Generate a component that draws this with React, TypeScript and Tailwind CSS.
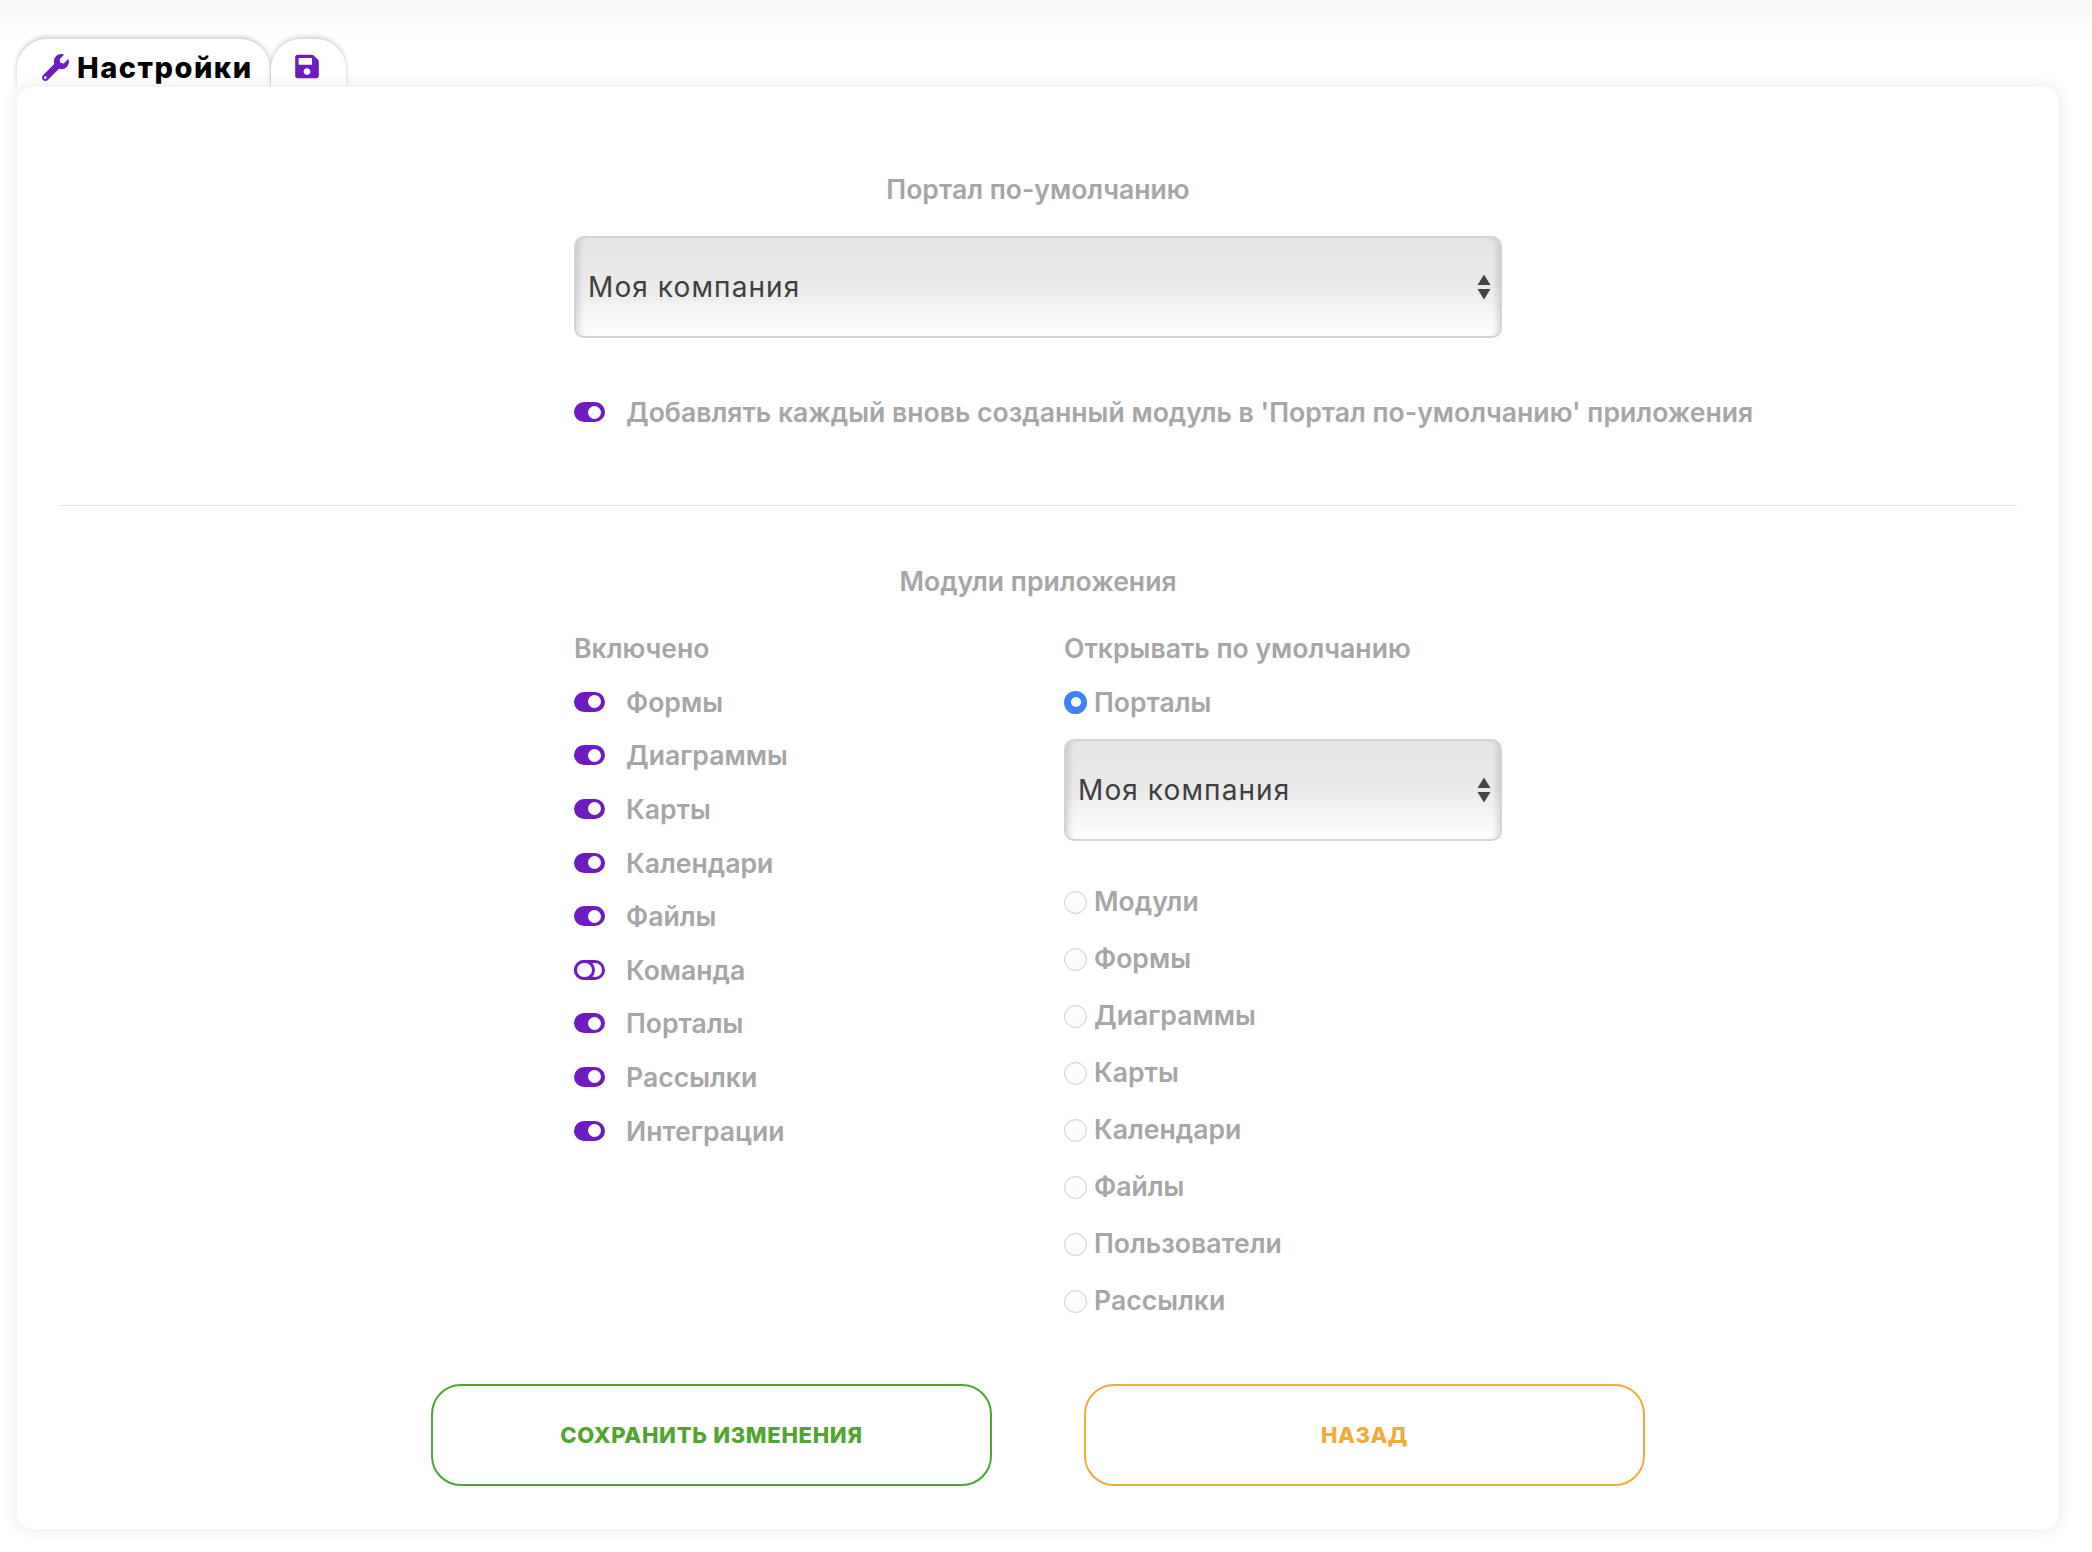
import React from "react";
import { FaWrench, FaSave } from "react-icons/fa";

const enabled: [string, boolean][] = [
  ["Формы", true],
  ["Диаграммы", true],
  ["Карты", true],
  ["Календари", true],
  ["Файлы", true],
  ["Команда", false],
  ["Порталы", true],
  ["Рассылки", true],
  ["Интеграции", true],
];
const openers = ["Модули", "Формы", "Диаграммы", "Карты", "Календари", "Файлы", "Пользователи", "Рассылки"];

function Toggle({ on }: { on: boolean }) {
  if (on) {
    return (
      <span className="flex h-[20px] w-[31px] shrink-0 items-center justify-end rounded-full bg-[#6e1bc0] pr-[4px]">
        <span className="h-[13px] w-[13px] rounded-full bg-white" />
      </span>
    );
  }
  return (
    <span className="flex h-[20px] w-[31px] shrink-0 items-center rounded-full bg-[#6e1bc0] pl-[3px]">
      <span className="relative z-10 h-[14px] w-[15px] rounded-full bg-white shadow-[0_0_0_3px_#6e1bc0]" />
      <span className="-ml-[4px] h-[14px] w-[14px] rounded-full bg-white" />
    </span>
  );
}

function Radio({ on, label }: { on?: boolean; label: string }) {
  return (
    <div className="flex h-full items-center">
      {on ? (
        <span className="flex h-[23px] w-[23px] shrink-0 items-center justify-center rounded-full bg-[#3b82f6]">
          <span className="h-[10px] w-[10px] rounded-full bg-white" />
        </span>
      ) : (
        <span className="mt-[2px] h-[23px] w-[23px] shrink-0 rounded-full border border-[#cccccc] bg-[linear-gradient(#ffffff,#fafafa)] shadow-[inset_0_1px_2px_rgba(0,0,0,0.05)]" />
      )}
      <span className={(on ? "pt-[2px] " : "") + "ml-[7px] text-[26.6px] font-semibold text-[#a6a6a6]"}>{label}</span>
    </div>
  );
}

function SelectBox({ className }: { className: string }) {
  return (
    <div
      className={
        "relative flex h-[102px] items-center rounded-[10px] border-2 border-[#d3d3d3] bg-[linear-gradient(#e6e6e6_0%,#eaeaea_50%,#ffffff_100%)] pl-[12px] shadow-[inset_8px_0_6px_-5px_rgba(0,0,0,0.13),inset_-8px_0_6px_-5px_rgba(0,0,0,0.13)] " +
        className
      }
    >
      <span className="text-[28px] font-normal leading-none tracking-[1.1px] text-[#3f3f3f]">Моя компания</span>
      <svg className="absolute right-[9px] top-1/2 -translate-y-1/2" width="14" height="25" viewBox="0 0 14 25">
        <path d="M7 0 L13.5 10.5 H0.5 Z" fill="#444" />
        <path d="M0.5 14.5 H13.5 L7 25 Z" fill="#444" />
      </svg>
    </div>
  );
}

export default function App() {
  return (
    <div className="min-h-[1552px] bg-[linear-gradient(#f7f7f7_0px,#ffffff_40px)] pl-[17px] pt-[39px] font-['Inter',sans-serif]">
      <div className="relative z-10 flex h-[48px] items-stretch">
        <div className="flex w-[253px] items-center rounded-t-[30px] bg-white pl-[25px] pt-[9px] shadow-[0_-2px_5px_rgba(0,0,0,0.22)]">
          <FaWrench className="h-[27px] w-[27px] text-[#6e1bc0]" />
          <span className="ml-[8px] text-[29px] font-extrabold leading-none tracking-[1.5px] text-black">Настройки</span>
        </div>
        <div className="ml-[1px] flex w-[75px] items-center justify-center rounded-t-[30px] bg-white pr-[3px] pt-[7px] shadow-[0_-2px_5px_rgba(0,0,0,0.2)]">
          <FaSave className="h-[27px] w-[24px] text-[#6e1bc0]" />
        </div>
      </div>

      <div className="relative z-20 h-[1442px] w-[2042px] rounded-[16px] bg-white shadow-[0_0_16px_rgba(0,0,0,0.1)]">
        <div className="pt-[82px]">
          <h2 className="text-center text-[26.6px] font-semibold leading-[40px] text-[#a6a6a6]">Портал по-умолчанию</h2>
          <div className="mx-auto w-[928px]">
            <SelectBox className="mt-[27px] w-full" />
            <div className="mt-[54px] flex h-[40px] w-[1300px] items-center">
              <Toggle on />
              <span className="ml-[21px] whitespace-nowrap pt-[2px] text-[26.6px] font-semibold text-[#a6a6a6]">
                Добавлять каждый вновь созданный модуль в 'Портал по-умолчанию' приложения
              </span>
            </div>
          </div>
          <div className="mx-auto mt-[73px] h-px w-[1958px] bg-[#e6e6e6]" />
          <h2 className="mt-[55px] text-center text-[26.6px] font-semibold leading-[40px] text-[#a6a6a6]">Модули приложения</h2>

          <div className="mx-auto mt-[27px] flex w-[928px]">
            <div className="w-[490px]">
              <div className="text-[26.6px] font-semibold leading-[40px] text-[#a6a6a6]">Включено</div>
              <div className="mt-[7px]">
                {enabled.map(([name, on]) => (
                  <div key={name} className="flex h-[53.6px] items-center">
                    <Toggle on={on} />
                    <span className="ml-[21px] pt-[2px] text-[26.6px] font-semibold text-[#a6a6a6]">{name}</span>
                  </div>
                ))}
              </div>
            </div>
            <div className="w-[438px]">
              <div className="whitespace-nowrap text-[26.6px] font-semibold leading-[40px] text-[#a6a6a6]">Открывать по умолчанию</div>
              <div className="mt-[14px] h-[40px]">
                <Radio on label="Порталы" />
              </div>
              <SelectBox className="mt-[17px] w-full" />
              <div className="mt-[32px]">
                {openers.map((name) => (
                  <div key={name} className="h-[57px]">
                    <Radio label={name} />
                  </div>
                ))}
              </div>
            </div>
          </div>

          <div className="mx-auto mt-[55px] flex w-[1214px] justify-between">
            <button className="flex h-[102px] w-[561px] items-center justify-center rounded-[30px] border-2 border-[#4ea52f] bg-white text-[22px] font-extrabold uppercase tracking-[0.7px] text-[#4ea52f]">
              Сохранить изменения
            </button>
            <button className="flex h-[102px] w-[561px] items-center justify-center rounded-[30px] border-2 border-[#f4a93b] bg-white text-[22px] font-extrabold uppercase tracking-[0.5px] text-[#f4a93b]">
              Назад
            </button>
          </div>
        </div>
      </div>
    </div>
  );
}
